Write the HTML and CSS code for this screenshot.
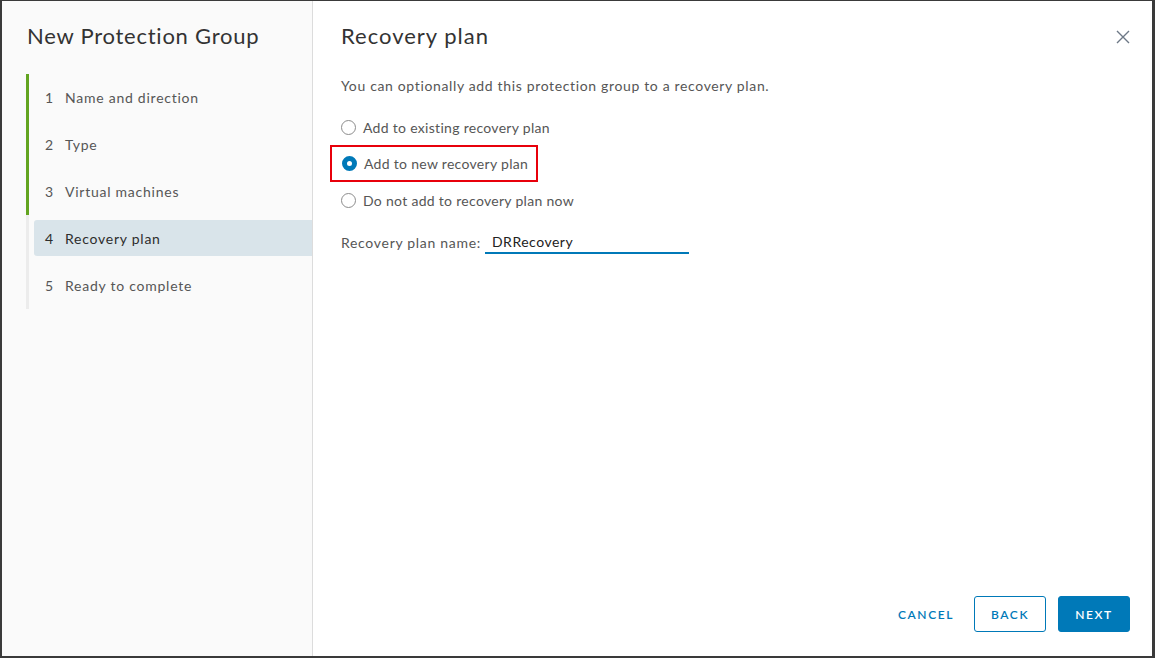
FILE: index.html
```html
<!DOCTYPE html>
<html lang="en">
<head>
  <meta charset="UTF-8">
  <title>New Protection Group</title>
  <link rel="stylesheet" href="styles.css">
</head>
<body>
  <div class="modal">
    <!-- wizard steps -->
    <div class="side">
      <h2 class="side-title">New Protection Group</h2>
      <div class="steps">
        <div class="step done"><span class="num">1</span>Name and direction</div>
        <div class="step done"><span class="num">2</span>Type</div>
        <div class="step done"><span class="num">3</span>Virtual machines</div>
        <div class="step active"><span class="num">4</span>Recovery plan</div>
        <div class="step"><span class="num">5</span>Ready to complete</div>
      </div>
    </div>

    <!-- page content -->
    <div class="main">
      <div class="main-head">
        <h3 class="main-title">Recovery plan</h3>
        <svg class="close" width="16" height="16" viewBox="0 0 16 16">
          <path d="M2 2 L14 14 M14 2 L2 14" stroke="#6d7886" stroke-width="1.4" fill="none"/>
        </svg>
      </div>
      <p class="desc">You can optionally add this protection group to a recovery plan.</p>
      <div class="radios">
        <label class="radio"><span class="dot"></span>Add to existing recovery plan</label>
        <label class="radio checked marked"><span class="dot"></span>Add to new recovery plan</label>
        <label class="radio"><span class="dot"></span>Do not add to recovery plan now</label>
      </div>
      <div class="field">
        <span class="field-label">Recovery plan name:</span>
        <input class="field-input" type="text" value="DRRecovery">
      </div>
      <div class="footer">
        <button class="btn btn-flat">CANCEL</button>
        <button class="btn btn-outline">BACK</button>
        <button class="btn btn-primary">NEXT</button>
      </div>
    </div>
  </div>
</body>
</html>
```

FILE: styles.css
```css
html, body { height: 100%; }
body {
  margin: 0;
  background: #3a3a3a;
  font-family: Lato, "Open Sans", sans-serif;
  color: #565656;
  font-size: 14px;
}
.modal {
  display: flex;
  height: 655px;
  margin: 1px 3px 0 2px;
  background: #fff;
}

/* left side */
.side {
  width: 310px;
  background: #fafafa;
  border-right: 1px solid #dcdcdc;
}
.side-title {
  margin: 22px 0 0 25px;
  font-size: 22px;
  font-weight: 400;
  color: #333;
  letter-spacing: 0.75px;
  line-height: 26px;
}
.steps {
  display: flex;
  flex-direction: column;
  margin: 25px 0 0 24px;
  border-left: 3px solid #eee;
  border-image: linear-gradient(to bottom, #62a420 0, #62a420 141px, #ececec 141px) 1;
}
.step {
  height: 36px;
  margin: 5px 0 6px 5px;
  padding-left: 11px;
  display: flex;
  align-items: center;
  border-radius: 3px 0 0 3px;
  letter-spacing: 0.75px;
}
.step .num { width: 20px; }
.step.active {
  background: #d9e4ea;
  color: #2d2d2d;
}

/* right side */
.main {
  flex: 1;
  display: flex;
  flex-direction: column;
  padding: 0 22px 24px 28px;
}
.main-head {
  display: flex;
  justify-content: space-between;
  align-items: center;
  margin-top: 22px;
}
.main-title {
  margin: 0;
  font-size: 22px;
  font-weight: 400;
  color: #333;
  line-height: 26px;
  letter-spacing: 1px;
}
.close { margin-right: -1px; margin-top: 2px; }
.desc {
  margin: 28px 0 0;
  letter-spacing: 0.65px;
}
.radios {
  display: flex;
  flex-direction: column;
  margin-top: 15px;
}
.radio {
  display: flex;
  align-items: center;
  height: 36px;
  letter-spacing: 0.3px;
}
.dot {
  box-sizing: border-box;
  width: 15px;
  height: 15px;
  border: 1px solid #8c8c8c;
  border-radius: 50%;
  margin-right: 7px;
  background: #fff;
}
.radio.checked .dot {
  border: 5.5px solid #0079b8;
  background: #fff;
}
.radio.marked {
  align-self: flex-start;
  margin-left: -11px;
  padding: 0 8px 0 10px;
  height: 33px;
  border: 2px solid #e8000b;
}
.field {
  display: flex;
  align-items: center;
  margin-top: 12px;
  letter-spacing: 0.7px;
}
.field-label { margin-right: 4px; }
.field-input {
  width: 197px;
  height: 22px;
  padding: 0 0 0 7px;
  border: none;
  border-bottom: 2px solid #0079b8;
  font: inherit;
  color: #222;
  outline: none;
  letter-spacing: 0.5px;
}
.footer {
  margin-top: auto;
  display: flex;
  justify-content: flex-end;
  gap: 12px;
}
.btn {
  box-sizing: border-box;
  width: 72px;
  height: 36px;
  border-radius: 3px;
  font-family: Lato, "Open Sans", sans-serif;
  font-size: 12px;
  font-weight: 600;
  letter-spacing: 1.6px;
  padding: 0;
  cursor: pointer;
}
.btn-flat {
  background: none;
  border: none;
  color: #0079b8;
}
.btn-outline {
  background: #fff;
  border: 1px solid #0079b8;
  color: #0079b8;
}
.btn-primary {
  background: #0079b8;
  border: 1px solid #0079b8;
  color: #fff;
}
```
